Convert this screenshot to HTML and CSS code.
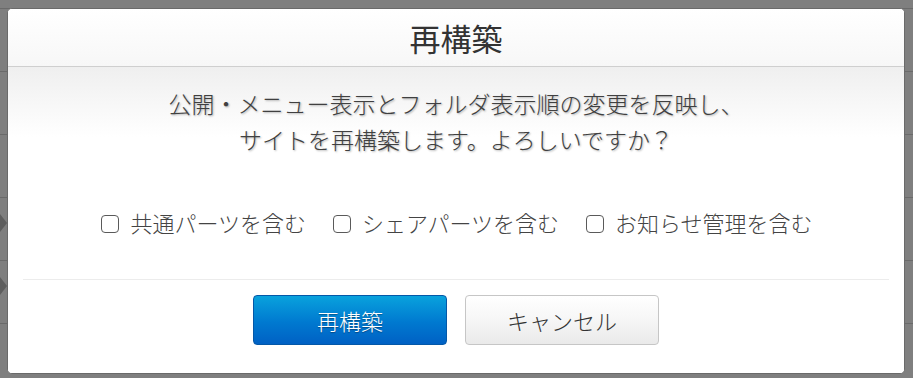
FILE: index.html
```html
<!DOCTYPE html>
<html lang="ja">
<head>
<meta charset="utf-8">
<title>再構築</title>
<link rel="stylesheet" href="styles.css">
</head>
<body>
<div class="backdrop">
  <span class="bg-arrow bg-arrow-1"></span>
  <span class="bg-arrow bg-arrow-2"></span>
  <div class="modal">
    <div class="modal-header">再構築</div>
    <div class="modal-body">
      <p class="message">公開・メニュー表示とフォルダ表示順の変更を反映し、<br>サイトを再構築します。よろしいですか？</p>
      <div class="options">
        <div class="option"><div class="check"></div><span class="option-text">共通パーツを含む</span></div>
        <div class="option"><div class="check"></div><span class="option-text">シェアパーツを含む</span></div>
        <div class="option"><div class="check"></div><span class="option-text">お知らせ管理を含む</span></div>
      </div>
      <div class="divider"></div>
      <div class="actions">
        <button class="btn btn-primary">再構築</button>
        <button class="btn btn-cancel">キャンセル</button>
      </div>
    </div>
  </div>
</div>
</body>
</html>
```
FILE: styles.css
```css
html, body {
  margin: 0;
  padding: 0;
}
body {
  width: 913px;
  height: 378px;
  overflow: hidden;
  font-family: "Noto Sans CJK JP", "Noto Sans", sans-serif;
  font-weight: 300;
  color: #3c3c3c;
}
.backdrop {
  position: relative;
  width: 913px;
  height: 378px;
  box-sizing: border-box;
  padding: 8px 8px 4px 7px;
  background-color: #7f7f7f;
  background-image: repeating-linear-gradient(to bottom, #7f7f7f 0, #7f7f7f 62px, #6a6a6a 62px, #6a6a6a 63px);
  background-position: 0 9px;
}
.bg-arrow {
  position: absolute;
  left: 0;
  width: 0;
  height: 0;
  border-top: 9px solid transparent;
  border-bottom: 9px solid transparent;
  border-left: 7px solid #5e5e5e;
}
.bg-arrow-1 { top: 214px; }
.bg-arrow-2 { top: 277px; }
.modal {
  position: relative;
  width: 898px;
  height: 366px;
  box-sizing: border-box;
  background: #fff;
  border: 1px solid #6a6a6a;
  border-radius: 5px;
  overflow: hidden;
  display: flex;
  flex-direction: column;
}
.modal-header {
  height: 57px;
  line-height: 57px;
  border-bottom: 1px solid #cfcfcf;
  text-align: center;
  font-size: 31px;
  font-weight: 400;
  color: #333;
  background: linear-gradient(to bottom, #ffffff 0%, #f7f7f7 100%);
}
.modal-body {
  flex: 1;
  display: flex;
  flex-direction: column;
  background: linear-gradient(to bottom, #efefef 0px, #ffffff 70px, #ffffff 100%);
}
.message {
  margin: 0;
  padding-top: 18px;
  text-align: center;
  font-size: 23px;
  line-height: 36px;
  color: #404040;
  text-shadow: 1px 1px 2px rgba(0, 0, 0, 0.3);
}
.options {
  margin-top: 47px;
  display: flex;
  justify-content: center;
  gap: 27px;
  height: 36px;
  align-items: center;
  padding-left: 2px;
}
.option {
  display: flex;
  align-items: center;
  font-size: 22px;
  color: #444;
}
.check {
  flex: 0 0 18px;
  box-sizing: border-box;
  width: 18px;
  height: 18px;
  border: 1.5px solid #5a5a5a;
  border-radius: 4px;
  background: #fff;
  margin-right: 11px;
  margin-top: 3px;
}
.divider {
  margin: 39px 15px 0;
  height: 1px;
  background: #ececec;
}
.actions {
  display: flex;
  justify-content: center;
  gap: 18px;
  margin-top: 15px;
}
.btn {
  width: 194px;
  height: 50px;
  box-sizing: border-box;
  border-radius: 4px;
  font-family: "Noto Sans CJK JP", "Noto Sans", sans-serif;
  font-weight: 300;
  font-size: 22px;
  padding: 0;
  cursor: pointer;
}
.btn-primary {
  color: #fff;
  border: 1px solid #0458a8;
  background: linear-gradient(to bottom, #09a2dd 0%, #0079d0 55%, #0061c4 100%);
  text-shadow: 0 1px 1px rgba(0, 0, 0, 0.35);
}
.btn-cancel {
  color: #333;
  border: 1px solid #c6c6c6;
  background: linear-gradient(to bottom, #ffffff 0%, #f6f6f6 50%, #eaeaea 100%);
}
```
